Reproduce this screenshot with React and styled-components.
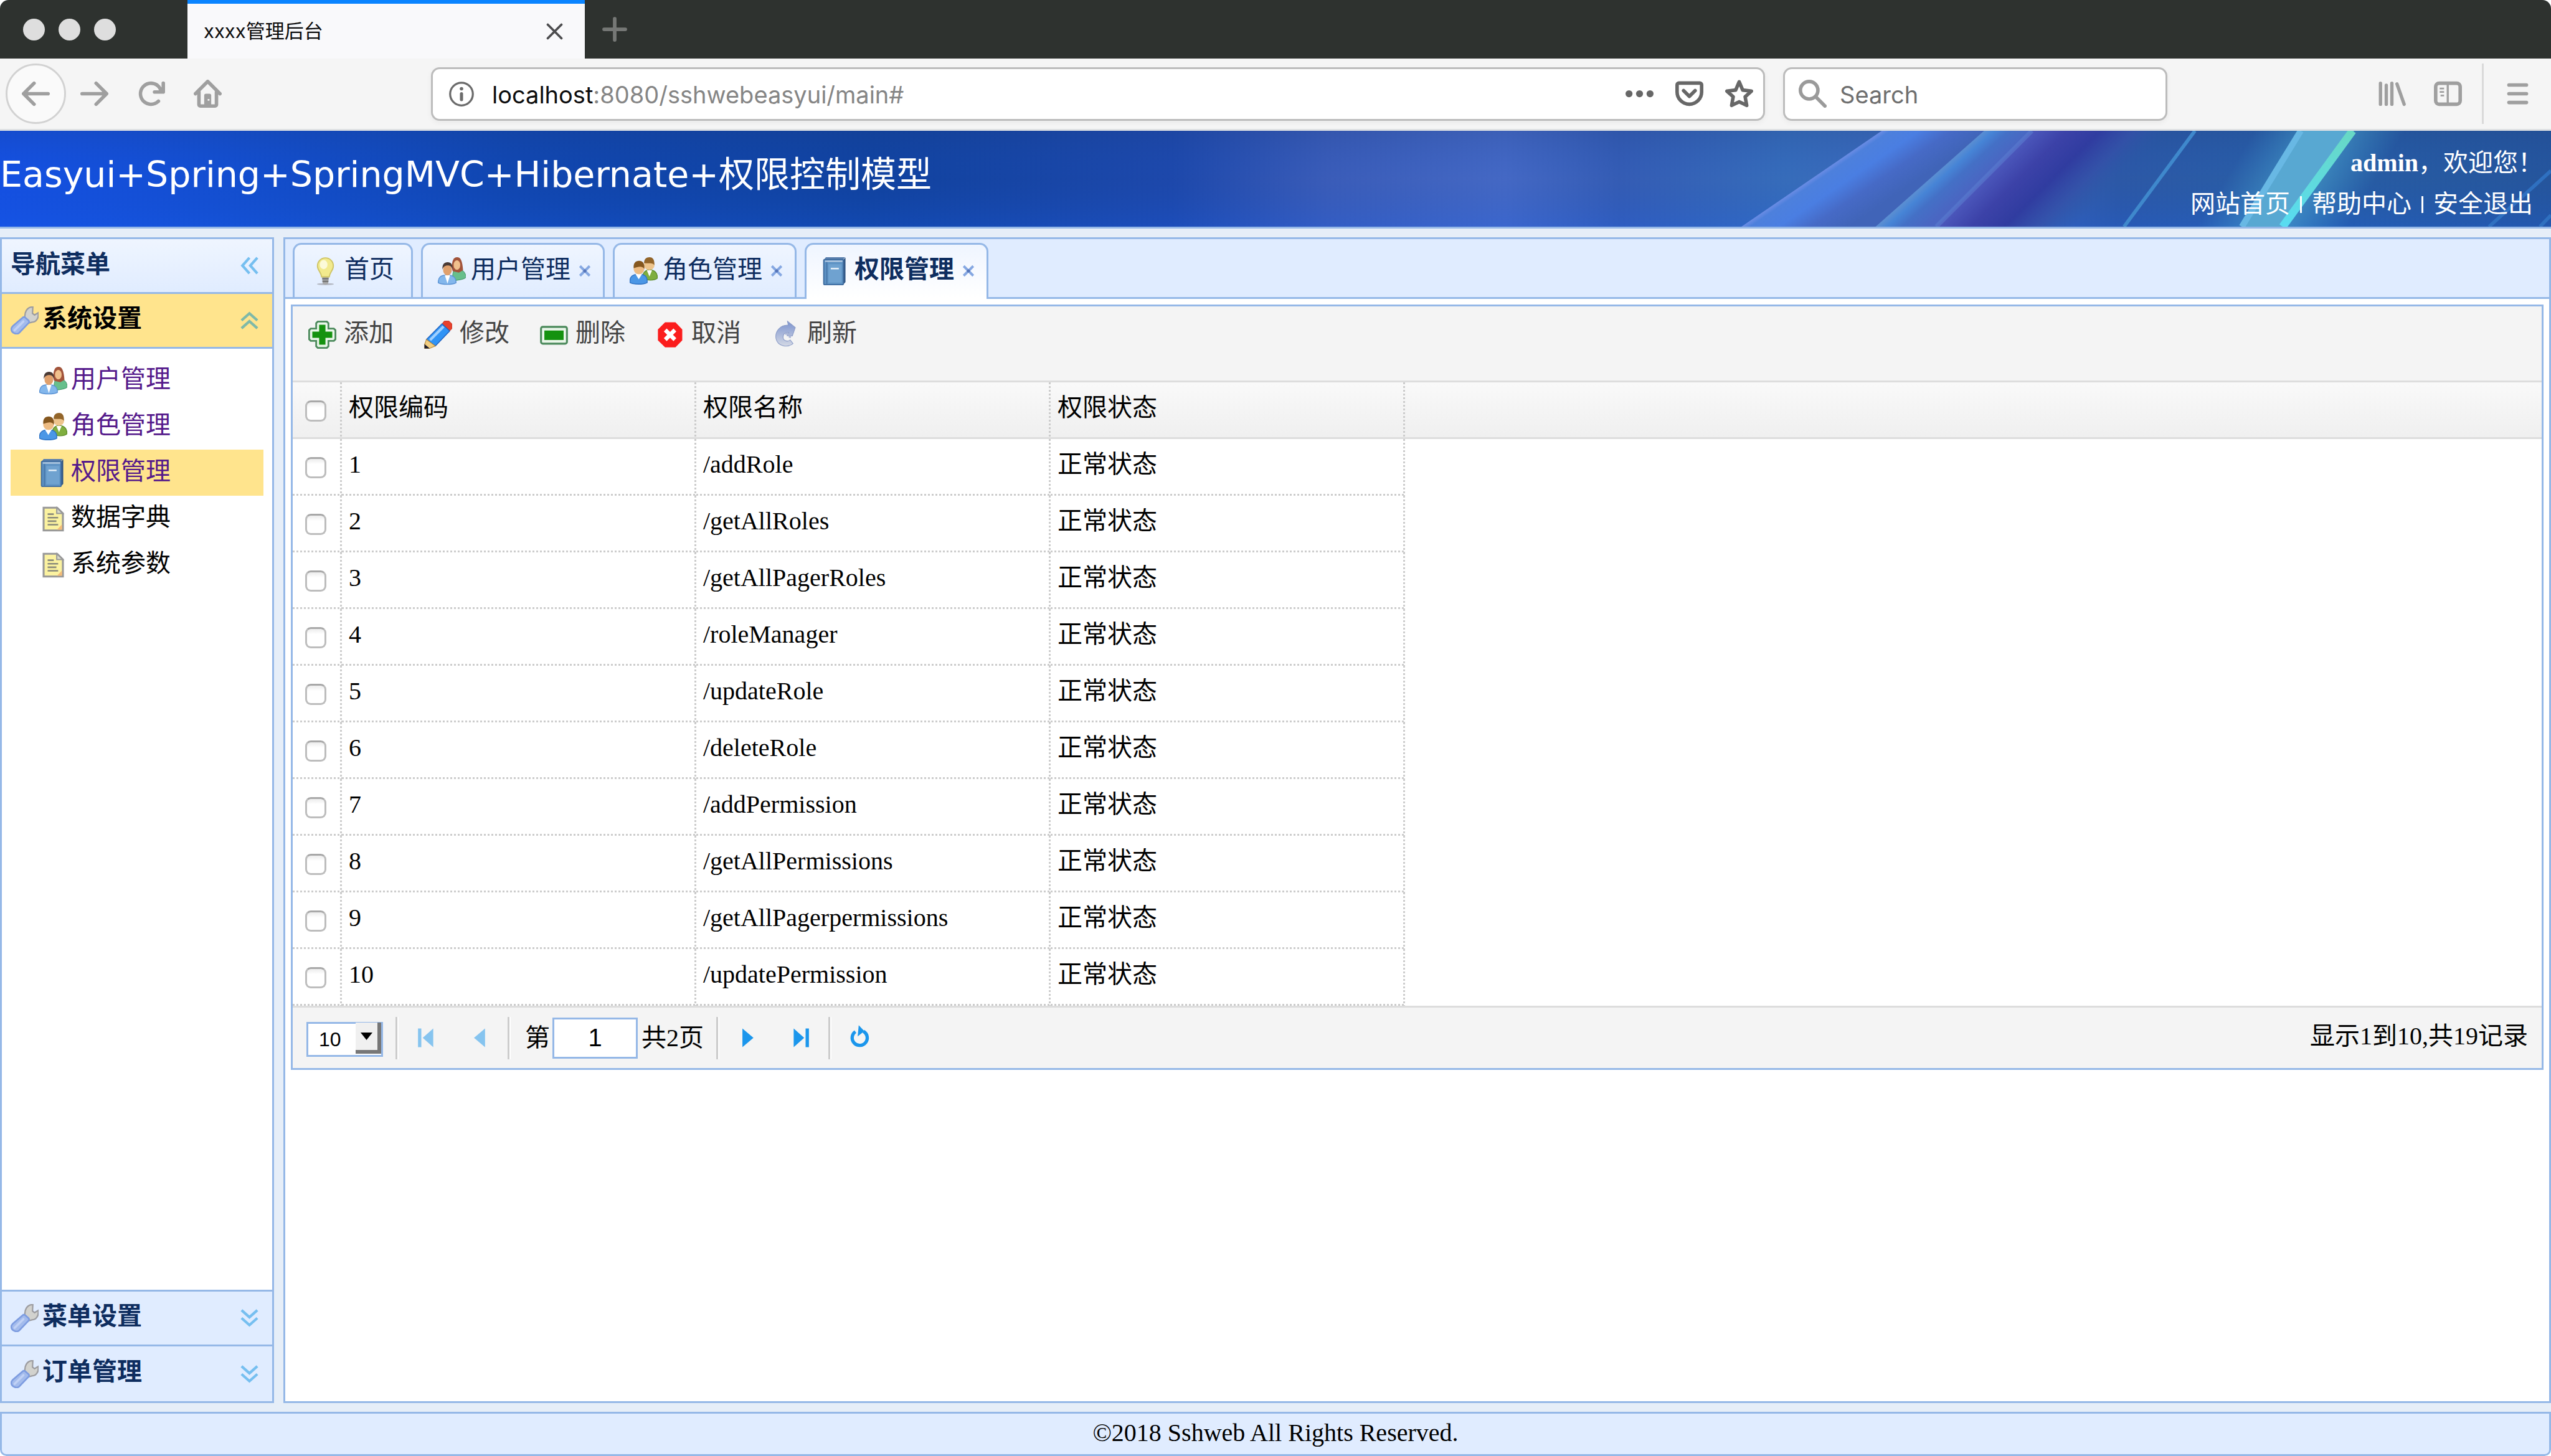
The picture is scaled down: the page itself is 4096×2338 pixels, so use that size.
import React, { useState } from "react";
import styled, { createGlobalStyle, css } from "styled-components";

const line = "#95b8e7";
const cjk = '"Noto Sans CJK SC"';
const serif = `"Liberation Serif", ${cjk}, serif`;
const sans = `"Liberation Sans", ${cjk}, sans-serif`;
const chrome = `Inter, ${cjk}, sans-serif`;

const GlobalStyle = createGlobalStyle`
  *, *::before, *::after { box-sizing: border-box; }
  html, body, #root { height: 100%; }
  body { margin: 0; background: #fff; font: 40px/56px ${serif}; color: #000; }
  button, input, select { font: inherit; color: inherit; margin: 0; padding: 0; }
  button { background: none; border: 0; cursor: pointer; }
  a { color: inherit; text-decoration: none; }
  ul { list-style: none; margin: 0; padding: 0; }
  h1, h2, h3, p { margin: 0; font-size: inherit; font-weight: inherit; }
  svg { display: block; flex: none; }
`;

const Page = styled.div`
  display: flex;
  flex-direction: column;
  min-height: 100%;
  border-radius: 14px 14px 10px 10px;
  overflow: hidden;
  background: #e6eef8;
`;

/* ---------- browser window ---------- */

const TitleBar = styled.div`
  display: flex;
  align-items: center;
  height: 94px;
  background: #2e322f;
`;

const Lights = styled.div`
  display: flex;
  gap: 22px;
  width: 301px;
  padding-left: 37px;
`;

const Light = styled.span`
  width: 35px;
  height: 35px;
  border-radius: 50%;
  background: #dedede;
`;

const BrowserTab = styled.div`
  display: flex;
  align-items: center;
  justify-content: space-between;
  align-self: stretch;
  width: 638px;
  padding: 0 35px 0 26px;
  border-top: 6px solid #0a84ff;
  background: #f9f9fb;
  font: 31px/40px ${chrome};
  color: #0c0c0d;
`;

const IconButton = styled.button`
  display: flex;
  align-items: center;
  justify-content: center;
  color: ${(p) => p.$color || "#9f9f9f"};
`;

const NewTab = styled(IconButton)`
  width: 96px;
  height: 88px;
`;

const NavBar = styled.div`
  display: flex;
  align-items: center;
  height: 116px;
  padding: 0 31px 0 9px;
  background: #f5f5f5;
  border-bottom: 3px solid #dfe1e3;
`;

const NavButtons = styled.div`
  display: flex;
  align-items: center;
  gap: 46px;
  width: 683px;
`;

const BackButton = styled(IconButton)`
  width: 97px;
  height: 97px;
  margin-right: -23px;
  border: 3px solid #d2d2d2;
  border-radius: 50%;
  background: #fafafa;
`;

const Field = styled.label`
  display: flex;
  align-items: center;
  min-width: 0;
  height: 86px;
  border: 3px solid #bcbcbc;
  border-radius: 14px;
  background: #fff;
  box-shadow: 0 3px 9px rgba(0, 0, 0, 0.05);
  font: 38px/56px ${chrome};
`;

const UrlField = styled(Field)`
  flex: 0 1 2142px;
  gap: 29px;
  padding: 0 16px 0 26px;
`;

const UrlText = styled.span`
  flex: 1;
  padding-top: 2px;
  color: #858585;
  b { font-weight: 400; color: #0c0c0d; }
`;

const UrlTools = styled.div`
  display: flex;
  gap: 35px;
`;

const SearchField = styled(Field)`
  flex: 0 1 617px;
  gap: 21px;
  margin-left: 29px;
  padding: 0 20px 0 22px;
  input {
    flex: 1;
    min-width: 0;
    padding-top: 2px;
    border: 0;
    outline: 0;
    background: none;
  }
  input::placeholder { color: #6f6f6f; opacity: 1; }
`;

const SearchIcon = styled.span`
  color: #9a9a9a;
`;

const NavTools = styled.div`
  display: flex;
  align-items: center;
  gap: 45px;
  margin-left: auto;
`;

const NavDivider = styled.span`
  width: 3px;
  height: 97px;
  margin: 0 -13px;
  background: #d9d9d9;
`;

/* ---------- banner ---------- */

const Banner = styled.header`
  position: relative;
  display: flex;
  align-items: center;
  justify-content: space-between;
  height: 157px;
  border-bottom: 3px solid ${line};
  color: #fff;
`;

const BannerArt = styled.svg`
  position: absolute;
  inset: 0;
  width: 100%;
  height: 100%;
`;

const BannerTitle = styled.h1`
  position: relative;
  padding-bottom: 14px;
  font: 57px/80px "DejaVu Sans", ${cjk}, sans-serif;
`;

const BannerSide = styled.div`
  position: relative;
  display: flex;
  flex-direction: column;
  align-items: flex-end;
  padding: 16px 13px 0 0;
  line-height: 66px;
`;

const BannerLinks = styled.nav`
  display: flex;
  align-items: center;
  gap: 16px;
  padding-right: 16px;
`;

const Bar = styled.span`
  width: 3px;
  height: 27px;
  background: #fff;
`;

/* ---------- layout ---------- */

const Middle = styled.div`
  flex: 1;
  display: flex;
  gap: 15px;
  padding: 14px 0;
`;

const West = styled.aside`
  display: flex;
  flex-direction: column;
  width: 440px;
  border: 3px solid ${line};
  background: #fff;
`;

const PanelHead = styled.div`
  display: flex;
  align-items: center;
  justify-content: space-between;
  height: 88px;
  padding: 0 14px;
  border-bottom: 3px solid ${line};
  background: linear-gradient(#eff5ff, #e0ecff);
  color: #0e2d5f;
  font-weight: 700;
  h2 { padding-bottom: 4px; }
`;

const AccordionHead = styled.button`
  display: flex;
  align-items: center;
  width: 100%;
  height: 88px;
  padding: 0 14px;
  border-bottom: 3px solid ${line};
  background: ${(p) => (p.$open ? "#ffe48d" : "#e0ecff")};
  color: ${(p) => (p.$open ? "#000" : "#0e2d5f")};
  font-weight: 700;
  text-align: left;
  &:last-child { border-bottom: 0; }
  span { flex: 1; padding: 0 0 6px 6px; }
`;

const AccordionBody = styled.div`
  flex: 1;
  padding: 14px;
  border-bottom: 3px solid ${line};
`;

const MenuLink = styled.a`
  display: flex;
  align-items: center;
  gap: 6px;
  height: 74px;
  padding-left: 46px;
  background: ${(p) => (p.$active ? "#ffe48d" : "transparent")};
  color: ${(p) => (p.$visited ? "#551a8b" : "#000")};
  span { padding-bottom: 4px; }
`;

const Center = styled.main`
  flex: 1;
  min-width: 0;
  border: 3px solid ${line};
  background: #fff;
`;

const Tabs = styled.div`
  display: flex;
  align-items: flex-end;
  gap: 13px;
  height: 96px;
  padding-left: 12px;
  border-bottom: 3px solid ${line};
  background: #e0ecff;
`;

const Tab = styled.div`
  display: flex;
  align-items: center;
  height: 87px;
  padding: 0 ${(p) => (p.$plain ? 27 : 19)}px 0 ${(p) => (p.$plain ? 27 : 24)}px;
  border: 3px solid ${line};
  border-bottom: 0;
  border-radius: 14px 14px 0 0;
  background: linear-gradient(#eff5ff, #e0ecff);
  color: #0e2d5f;
  ${(p) =>
    p.$active &&
    css`
      height: 90px;
      margin-bottom: -3px;
      padding-bottom: 3px;
      background: linear-gradient(#eff5ff, #fff);
      font-weight: 700;
    `}
`;

const TabLabel = styled.button`
  display: flex;
  align-items: center;
  gap: 8px;
  font-weight: inherit;
  span { padding-bottom: 5px; }
`;

const TabClose = styled(IconButton)`
  width: 20px;
  height: 20px;
  margin-left: 13px;
`;

const Content = styled.div`
  padding: 9px;
`;

const Datagrid = styled.section`
  border: 3px solid ${line};
`;

const Toolbar = styled.div`
  display: flex;
  align-items: flex-start;
  gap: 49px;
  height: 122px;
  padding: 14px 25px;
  border-bottom: 3px solid #ddd;
  background: #f4f4f4;
`;

const ToolButton = styled.button`
  display: flex;
  align-items: center;
  gap: 12px;
  height: 62px;
  color: #444;
  span { padding-bottom: 4px; }
`;

const Table = styled.table`
  width: 100%;
  border-collapse: separate;
  border-spacing: 0;
  table-layout: fixed;
  text-align: left;
`;

const Col = styled.col`
  width: ${(p) => p.$width}px;
`;

const dottedRight = "repeating-linear-gradient(#ccc 0 3px, transparent 3px 6px) right / 3px 100% no-repeat";
const dottedBottom = "repeating-linear-gradient(90deg, #ccc 0 3px, transparent 3px 6px) bottom / 100% 3px no-repeat";

const HeadRow = styled.tr`
  background: linear-gradient(#f9f9f9, #efefef);
`;

const HeadCell = styled.th`
  height: 91px;
  padding: 0 11px 6px;
  border-bottom: 3px solid #ddd;
  background: ${dottedRight};
  font-weight: 400;
  &:first-child { padding: 0; }
  &:last-child { background: none; }
`;

const Cell = styled.td`
  height: 91px;
  padding: 0 11px 9px;
  background: ${dottedRight}, ${dottedBottom};
  &:first-child { padding: 0; }
  &:last-child { background: none; }
`;

const Check = styled.input`
  appearance: none;
  display: block;
  width: 34px;
  height: 34px;
  margin: 0 0 0 20px;
  border: 3px solid #bdbdbd;
  border-top-color: #a8a8a8;
  border-radius: 9px;
  background: linear-gradient(#ececec, #fff 30%);
  th & { margin-top: 4px; }
`;

const Pager = styled.div`
  display: flex;
  align-items: center;
  height: 100px;
  padding: 0 22px;
  border-top: 3px solid #ddd;
  background: #f4f4f4;
`;

const SizeBox = styled.div`
  position: relative;
  width: 123px;
  height: 56px;
  margin-right: 20px;
  select {
    appearance: none;
    width: 100%;
    height: 100%;
    padding-left: 17px;
    border: 3px solid ${line};
    border-radius: 0;
    background: #fff;
    font: 32px/48px ${sans};
  }
`;

const SizeArrow = styled.span`
  position: absolute;
  top: 3px;
  right: 3px;
  bottom: 3px;
  display: flex;
  align-items: center;
  justify-content: center;
  width: 41px;
  border: solid;
  border-width: 0 6px 6px 0;
  border-color: #f0f0f0 #777 #777 #f0f0f0;
  background: #f0f0f0;
  pointer-events: none;
`;

const PagerDivider = styled.span`
  width: 5px;
  height: 68px;
  border-left: 3px solid #ccc;
  border-right: 2px solid #fff;
`;

const PagerGroup = styled.div`
  display: flex;
  gap: 39px;
  padding: 0 23px;
`;

const PagerButton = styled(IconButton)`
  width: 45px;
  height: 62px;
  color: #1b96ec;
  opacity: ${(p) => (p.disabled ? 0.5 : 1)};
`;

const PageLabel = styled.label`
  display: flex;
  align-items: center;
  padding: 0 20px 0 23px;
  input {
    width: 137px;
    height: 66px;
    margin: 0 6px 0 4px;
    border: 3px solid ${line};
    background: #fff;
    font: 40px/56px ${sans};
    text-align: center;
  }
`;

const Summary = styled.p`
  margin-left: auto;
  padding-bottom: 6px;
`;

const Footer = styled.footer`
  height: 71px;
  padding-top: 3px;
  border: 3px solid ${line};
  border-radius: 0 0 10px 10px;
  background: #e0ecff;
  text-align: center;
`;

/* ---------- icons ---------- */

const Glyph = ({ size = 45, box = 16, children, ...rest }) => (
  <svg width={size} height={size} viewBox={`0 0 ${box} ${box}`} fill="currentColor" aria-hidden="true" {...rest}>
    {children}
  </svg>
);

const stroke = { fill: "none", stroke: "currentColor", strokeLinecap: "round", strokeLinejoin: "round" };

const CloseGlyph = () => (
  <Glyph size={27}><path {...stroke} strokeWidth="2.2" d="M1.5 1.5l13 13M14.5 1.5l-13 13" /></Glyph>
);
const PlusGlyph = () => (
  <Glyph size={40}><path {...stroke} strokeWidth="2.3" d="M8 1.2v13.6M1.2 8h13.6" /></Glyph>
);
const BackGlyph = () => (
  <Glyph>
    <path {...stroke} strokeWidth="2" d="M15 8H1.400M7 2L1 8l6 6" />
    <path d="M1 8l2.600-1.600v3.200z" />
  </Glyph>
);
const ForwardGlyph = () => (
  <Glyph>
    <path {...stroke} strokeWidth="2" d="M1 8h13.600M9 2l6 6-6 6" />
    <path d="M15 8l-2.600-1.600v3.200z" />
  </Glyph>
);
const ReloadGlyph = () => (
  <Glyph>
    <path d="M15 1a1 1 0 0 0-1 1v2.418A6.995 6.995 0 1 0 8 15a6.954 6.954 0 0 0 4.950-2.050 1 1 0 0 0-1.414-1.414A5.019 5.019 0 1 1 12.549 6H10a1 1 0 0 0 0 2h5a1 1 0 0 0 1-1V2a1 1 0 0 0-1-1z" />
  </Glyph>
);
const HomeGlyph = () => (
  <Glyph>
    <path {...stroke} strokeWidth="2" d="M1 8l7-7 7 7M3 7v7.200a.8.8 0 0 0 .8.8h8.400a.8.8 0 0 0 .8-.8V7" />
    <path fillRule="evenodd" d="M6 15V9a1 1 0 0 1 1-1h2a1 1 0 0 1 1 1v6zM8 11v1h1v-1z" />
  </Glyph>
);
const InfoGlyph = () => (
  <Glyph size={40}>
    <circle cx="8" cy="8" r="7.3" fill="none" stroke="currentColor" strokeWidth="1.3" />
    <circle cx="8" cy="4.6" r="1.1" />
    <path {...stroke} strokeWidth="2" d="M8 7.800v3.800" />
  </Glyph>
);
const MoreGlyph = () => (
  <Glyph><circle cx="2" cy="8" r="2" /><circle cx="8" cy="8" r="2" /><circle cx="14" cy="8" r="2" /></Glyph>
);
const PocketGlyph = () => (
  <Glyph>
    <path {...stroke} strokeWidth="2" d="M2 1.900h12a1 1 0 0 1 1 1V7a7 7 0 0 1-14 0V2.900a1 1 0 0 1 1-1z" />
    <path {...stroke} strokeWidth="2" d="M4.700 6.200L8 9.500l3.300-3.300" />
  </Glyph>
);
const StarGlyph = () => (
  <Glyph>
    <path {...stroke} strokeWidth="2" d="M8 1.200l2 4.700 5 .6-3.600 3.200.9 5L8 12.600l-4.300 2.100.9-5L1 6.500l5-.6z" />
  </Glyph>
);
const SearchGlyph = () => (
  <Glyph>
    <circle cx="6" cy="6" r="5" fill="none" stroke="currentColor" strokeWidth="2" />
    <path {...stroke} strokeWidth="2" d="M9.800 9.800L15 15" />
  </Glyph>
);
const LibraryGlyph = () => (
  <Glyph><path {...stroke} strokeWidth="1.900" d="M1.500 2v12M4.800 3.200V14M8 2v12M10.900 2.400L15 14" /></Glyph>
);
const SidebarGlyph = () => (
  <Glyph>
    <rect x="1" y="2" width="14" height="12" rx="2" fill="none" stroke="currentColor" strokeWidth="2" />
    <path d="M7.300 2.500h1.200v11H7.300zM3.300 4.500h2.500v1H3.300zM3.300 6.500h2.500v1H3.300zM3.800 8.500h2v1h-2z" />
  </Glyph>
);
const MenuGlyph = () => (
  <Glyph><path {...stroke} strokeWidth="2" d="M3 3h10M3 8h10M3 13h10" /></Glyph>
);

const Chevrons = ({ dir, color = "#76bff0" }) => {
  const turn = { left: 0, up: 90, down: -90 }[dir];
  return (
    <Glyph color={color}>
      <g transform={`rotate(${turn} 8 8)`}>
        <path {...stroke} strokeLinecap="butt" strokeLinejoin="miter" strokeWidth="1.500" d="M8 3.500L4 8l4 4.500M12.500 3.500L8.500 8l4 4.500" />
      </g>
    </Glyph>
  );
};

const Wrench = () => (
  <Glyph>
    <path d="M8.300 7.200C7.600 3.500 9.300.3 12.700.3l-.2 3.700 1.200.9 2-1.200c.5 2.900-1 5.300-3.500 5.300l-1.800.5z" fill="#d2d2ce" stroke="#9c9ca0" strokeWidth=".8" />
    <path d="M6.900 6.400c.5-.5 1-.4 1.500 0l1.800 1.600c.5.500.5 1 0 1.600l-5.300 5.500c-1.400 1.200-4.500.2-4.500-2.200 0-.7.300-1.100.8-1.600z" fill="#a3bbec" stroke="#7d9ce0" strokeWidth=".9" />
    <path d="M7.300 8.600l-5 5" stroke="#c0d1f5" strokeWidth="1.300" strokeLinecap="round" />
  </Glyph>
);
const Users = () => (
  <Glyph>
    <path d="M8.500 13.500V10c0-2 1-3 3.200-3S16 8.500 16 11.500c-1 1.300-4 1.500-7.500 2z" fill="#67bf8c" stroke="#4a9d72" strokeWidth=".4" />
    <path d="M8 6c0-4 1-6 3-6s3 2 3.400 7.500L12 8.800 8.500 8z" fill="#a2543b" />
    <ellipse cx="10.900" cy="4.500" rx="1.900" ry="2.700" fill="#f0c08d" />
    <path d="M.2 14.600c0-3 1.200-4.400 5-4.400s5.200 1.400 5.200 4.400c-2.400 1.200-7.600 1.200-10.200 0z" fill="#83b7ec" stroke="#5a92d4" strokeWidth=".5" />
    <path d="M4 10.300L5.500 15 7 10.300z" fill="#fff" />
    <ellipse cx="5.500" cy="7.200" rx="2.500" ry="3.200" fill="#e0a06c" />
    <path d="M2.600 7C2.500 4 3.700 2.800 5.600 2.800S8.600 4 8.400 7c-.6-1.800-1.400-2.300-2.700-2.300S3.200 5.200 2.600 7z" fill="#4a3a35" />
  </Glyph>
);
const Group = () => (
  <Glyph>
    <path d="M7.500 12.500C7 9.500 8.500 7.300 11.500 7.300s4.500 2 4.300 4.700c-1.600 1.300-5 1.300-8.300.5z" fill="#7fae3f" stroke="#5f8f2c" strokeWidth=".5" />
    <path d="M9.800 7.500L11.300 11l1.500-3.500z" fill="#fff" />
    <circle cx="11.200" cy="4.400" r="3" fill="#edc48c" />
    <path d="M8.200 3.400C8.200 1 9.600 0 11.300 0s3 1 2.800 4.500C13 3 11 3.700 8.200 3.400z" fill="#93652a" />
    <path d="M.2 14.500c-.3-3.300 1.300-4.800 5-4.800s5 1.500 4.800 4.800c-2.600 1.200-7.200 1.200-9.800 0z" fill="#4b97e6" stroke="#2f73c4" strokeWidth=".5" />
    <path d="M3.300 9.600l1.900 3 1.900-3z" fill="#fff" />
    <circle cx="5.300" cy="6.800" r="3" fill="#edbb82" />
    <path d="M2.300 6.300C2 3.300 3.400 2 5.400 2s3.300 1.300 3 4.800C7.300 4.800 5 5.300 2.300 6.300z" fill="#85571f" />
  </Glyph>
);
const Book = () => (
  <Glyph>
    <path d="M2.500 0h11L12 1.800H1.200z" fill="#5b80ae" />
    <path d="M13.700.2v14l-1.500 1.600V1.800z" fill="#2f5584" />
    <rect x="1.300" y="1.300" width="11.200" height="14.400" rx=".6" fill="#5e93c4" stroke="#3f6c9f" strokeWidth=".7" />
    <path d="M3 1.500v14" stroke="#4a79ac" strokeWidth=".8" />
    <path d="M2 2.300h10" stroke="#b8cde4" strokeWidth=".8" />
    <rect x="4" y="4" width="7.500" height="10.500" fill="#6fa2d0" />
    <path d="M5.300 6.500h4.600" stroke="#e3eef8" strokeWidth=".9" />
  </Glyph>
);
const Note = () => (
  <Glyph>
    <path d="M2.500 1.500h7.700l3.300 3.300v9.700h-11z" fill="#fbf2a0" stroke="#989898" strokeWidth="1.100" />
    <path d="M10 1.500v3.300h3.500z" fill="#d9d9c8" stroke="#989898" strokeWidth=".7" />
    <path d="M4.800 5.200h3.500M4.800 7.200h6M4.800 9.200h5M4.800 11.200h6" stroke="#8b8b7a" strokeWidth=".9" />
    <path d="M10.200 14l2.800-3v3z" fill="#f4bb78" />
  </Glyph>
);
const Bulb = () => (
  <Glyph>
    <ellipse cx="8" cy="15.400" rx="4.800" ry=".6" fill="#b5b9c4" />
    <path d="M6 10.500h4l-.4 4.400c-.5.800-2.700.800-3.200 0z" fill="#a8a8a8" />
    <path d="M6.200 12.300h3.600M6.300 13.800h3.400" stroke="#6d6d6d" strokeWidth=".7" />
    <path d="M8 .4a4.500 4.500 0 0 1 4.500 4.800c0 2.200-2 3.300-2.300 6H5.800c-.3-2.700-2.300-3.800-2.300-6A4.500 4.500 0 0 1 8 .4z" fill="#f2ea8d" stroke="#cfc568" strokeWidth=".7" />
    <ellipse cx="7" cy="4.200" rx="2.200" ry="2.600" fill="#fcfad8" />
  </Glyph>
);
const Add = () => (
  <Glyph>
    <path d="M5.400.5h5.200l.9.900v3.100h3.100l.9.900v5.200l-.9.900h-3.100v3.100l-.9.900H5.400l-.9-.9v-3.100H1.400l-.9-.9V5.400l.9-.9h3.100V1.400z" fill="#e9f6e9" stroke="#4c8a5c" strokeWidth="1" />
    <path d="M6.200 2.300h3.600v3.900h3.900v3.600H9.800v3.900H6.200V9.800H2.300V6.200h3.900z" fill="#14920f" />
  </Glyph>
);
const Pencil = () => (
  <Glyph>
    <path d="M11.500.2h2.700l1.600 1.500v2.900l-1.200 1.200L10.300 1.700z" fill="#e8402c" stroke="#c02a18" strokeWidth=".3" />
    <path d="M10.200 1.800l4.400 4.100-8.200 8.500-5.100-3.700z" fill="#2f93f5" stroke="#1f62c0" strokeWidth=".5" />
    <path d="M11.100 3.300L3.400 11" stroke="#9fd0ff" strokeWidth="1.500" />
    <path d="M1.300 10.700l5.100 3.700-3.300 1.400H.3v-2.300z" fill="#f2cd80" stroke="#b88a3a" strokeWidth=".4" />
    <path d="M.2 13.300l3 2.500H.2z" fill="#1c1c2c" />
  </Glyph>
);
const Remove = () => (
  <Glyph>
    <rect x=".6" y="3.500" width="14.800" height="9.600" rx="1" fill="#eaf6ea" stroke="#4c8a5c" strokeWidth="1.100" />
    <rect x="2.500" y="5.600" width="11" height="5.400" fill="#14920f" />
  </Glyph>
);
const Cancel = () => (
  <Glyph>
    <path d="M5.300.9h5.900l3.900 4.100v6.200l-3.900 4H5.300L1.200 11.200V5z" fill="#fb1d1d" />
    <path d="M5.400 5.300l5.500 5.500M10.900 5.300l-5.500 5.500" stroke="#fff" strokeWidth="2.300" />
  </Glyph>
);
const Reload = () => (
  <Glyph>
    <defs>
      <linearGradient id="reloadFade" x1="0" y1="0" x2="0" y2="1">
        <stop offset="0" stopColor="#7c93cf" />
        <stop offset="1" stopColor="#d3d8e4" />
      </linearGradient>
    </defs>
    <path d="M9 .2l4.500 3.700-1.700 4.800-3-.2 1-1.700C7.500 6.300 6.200 8 6.600 10c.4 1.700 2.800 2 4 1l1.600 2c-3 2.600-8.700 1.800-9.700-2.700C1.700 6 5 2.300 9.500 2.500z" fill="url(#reloadFade)" stroke="#8b9cc8" strokeWidth=".4" />
    <path d="M7.600 7.500c1.600-.3 3 .6 2.800 2.300" fill="none" stroke="#a9b5d6" strokeWidth="1.200" />
  </Glyph>
);
const SmallClose = () => (
  <Glyph size={20} box={7}>
    <path d="M.8.8l5.400 5.400M6.200.8L.8 6.200" stroke="#86a8e2" strokeWidth="1.400" />
    <circle cx="3.500" cy="3.500" r=".9" fill="#5574b8" />
  </Glyph>
);
const First = () => <Glyph><path d="M2.900 2.700h1.900v10.600H2.900zM11.600 2.700v10.600L5.600 8z" /></Glyph>;
const Prev = () => <Glyph><path d="M11.300 2.700v10.600L5 8z" /></Glyph>;
const Next = () => <Glyph><path d="M5 2.700v10.600L11.300 8z" /></Glyph>;
const Last = () => <Glyph><path d="M11.200 2.700h1.900v10.600h-1.900zM4.400 2.700v10.600l6-5.300z" /></Glyph>;
const Refresh = () => (
  <Glyph>
    <path d="M10.100 4.300a4.300 4.300 0 1 1-4.600.2" fill="none" stroke="currentColor" strokeWidth="1.900" />
    <path d="M7.400.8l3.200 3.400-3.800 3z" />
  </Glyph>
);

const BannerStreaks = () => (
  <BannerArt viewBox="0 0 5760 216" preserveAspectRatio="none" aria-hidden="true">
    <defs>
      <linearGradient id="base">
        <stop offset="0" stopColor="#1450e2" />
        <stop offset=".09" stopColor="#134ed0" />
        <stop offset=".2" stopColor="#1046b0" />
        <stop offset=".34" stopColor="#10429f" />
        <stop offset=".46" stopColor="#1d48ab" />
        <stop offset=".52" stopColor="#3a5cb8" />
        <stop offset=".59" stopColor="#4468c4" />
        <stop offset=".635" stopColor="#345cb4" />
        <stop offset=".7" stopColor="#366cba" />
        <stop offset=".78" stopColor="#3f66ba" />
        <stop offset=".83" stopColor="#2c58a6" />
        <stop offset=".9" stopColor="#285ea6" />
        <stop offset="1" stopColor="#25559c" />
      </linearGradient>
      <linearGradient id="rise" x1="0" y1="0" x2="0" y2="1">
        <stop offset="0" stopColor="#1c3c80" stopOpacity=".2" />
        <stop offset=".5" stopColor="#1a50c0" stopOpacity="0" />
        <stop offset="1" stopColor="#1a60f0" stopOpacity=".22" />
      </linearGradient>
      <linearGradient id="bandA" gradientUnits="userSpaceOnUse" x1="4249" y1="0" x2="4326" y2="113">
        <stop offset="0" stopColor="#6a8ce4" />
        <stop offset=".08" stopColor="#4d80dc" />
        <stop offset=".35" stopColor="#4a7ee2" />
        <stop offset=".65" stopColor="#466ac6" />
        <stop offset="1" stopColor="#4064b8" />
      </linearGradient>
      <linearGradient id="bandB" gradientUnits="userSpaceOnUse" x1="4480" y1="0" x2="4530" y2="56">
        <stop offset="0" stopColor="#5a8ed2" />
        <stop offset=".2" stopColor="#4684d6" />
        <stop offset=".5" stopColor="#4470c6" />
        <stop offset="1" stopColor="#4a66c2" />
      </linearGradient>
      <linearGradient id="bandC" gradientUnits="userSpaceOnUse" x1="4588" y1="0" x2="4743" y2="155">
        <stop offset="0" stopColor="#4c58bc" />
        <stop offset=".25" stopColor="#3c42a8" />
        <stop offset=".5" stopColor="#303ca0" />
        <stop offset=".75" stopColor="#3450a8" stopOpacity=".8" />
        <stop offset="1" stopColor="#2c58a6" stopOpacity="0" />
      </linearGradient>
      <linearGradient id="glow" gradientUnits="userSpaceOnUse" x1="5090" y1="0" x2="5340" y2="150">
        <stop offset="0" stopColor="#4ab0d8" stopOpacity="0" />
        <stop offset=".5" stopColor="#58bcd8" stopOpacity=".55" />
        <stop offset="1" stopColor="#4ab0d8" stopOpacity="0" />
      </linearGradient>
      <linearGradient id="edge" x1="0" y1="0" x2="0" y2="1">
        <stop offset="0" stopColor="#68d8c4" />
        <stop offset="1" stopColor="#58dcf2" />
      </linearGradient>
    </defs>
    <rect width="5760" height="216" fill="url(#base)" />
    <rect width="5760" height="216" fill="url(#rise)" />
    <path d="M4249 0H4500L4255 216H3932z" fill="url(#bandA)" />
    <path d="M4480 0H4600L4384 216H4235z" fill="url(#bandB)" />
    <path d="M4588 0H4898L4682 216H4372z" fill="url(#bandC)" />
    <path d="M4588 0L4372 216" stroke="#5a7cd0" strokeWidth="10" opacity=".6" />
    <path d="M4956 0L4796 216" stroke="#3f88cc" strokeWidth="8" />
    <path d="M5060 0H5460L5320 216H4920z" fill="url(#glow)" />
    <path d="M5195 0H5316L5158 216H5062z" fill="#58a8d2" />
    <path d="M5195 0L5062 216" stroke="#68b8e4" strokeWidth="14" />
    <path d="M5312 0L5154 216" stroke="url(#edge)" strokeWidth="18" />
    <path d="M5760 90L5620 216M5760 190L5735 216" stroke="#2f70c0" strokeWidth="8" />
  </BannerArt>
);

/* ---------- data ---------- */

const menu = [
  { label: "用户管理", Icon: Users, visited: true },
  { label: "角色管理", Icon: Group, visited: true },
  { label: "权限管理", Icon: Book, visited: true, active: true },
  { label: "数据字典", Icon: Note },
  { label: "系统参数", Icon: Note },
];

const tabs = [
  { label: "首页", Icon: Bulb, plain: true },
  { label: "用户管理", Icon: Users },
  { label: "角色管理", Icon: Group },
  { label: "权限管理", Icon: Book },
];

const tools = [
  { label: "添加", Icon: Add },
  { label: "修改", Icon: Pencil },
  { label: "删除", Icon: Remove },
  { label: "取消", Icon: Cancel },
  { label: "刷新", Icon: Reload },
];

const rows = [
  "/addRole",
  "/getAllRoles",
  "/getAllPagerRoles",
  "/roleManager",
  "/updateRole",
  "/deleteRole",
  "/addPermission",
  "/getAllPermissions",
  "/getAllPagerpermissions",
  "/updatePermission",
];

/* ---------- parts ---------- */

const Browser = () => (
  <>
    <TitleBar>
      <Lights><Light /><Light /><Light /></Lights>
      <BrowserTab>
        <span>xxxx管理后台</span>
        <IconButton $color="#4c4c4e" aria-label="Close tab"><CloseGlyph /></IconButton>
      </BrowserTab>
      <NewTab $color="#767876" aria-label="New tab"><PlusGlyph /></NewTab>
    </TitleBar>
    <NavBar>
      <NavButtons>
        <BackButton aria-label="Back"><BackGlyph /></BackButton>
        <IconButton aria-label="Forward"><ForwardGlyph /></IconButton>
        <IconButton aria-label="Reload"><ReloadGlyph /></IconButton>
        <IconButton aria-label="Home"><HomeGlyph /></IconButton>
      </NavButtons>
      <UrlField as="div">
        <IconButton $color="#6b6b6b" aria-label="Site information"><InfoGlyph /></IconButton>
        <UrlText><b>localhost</b>:8080/sshwebeasyui/main#</UrlText>
        <UrlTools>
          <IconButton $color="#676767" aria-label="Page actions"><MoreGlyph /></IconButton>
          <IconButton $color="#676767" aria-label="Pocket"><PocketGlyph /></IconButton>
          <IconButton $color="#676767" aria-label="Bookmark"><StarGlyph /></IconButton>
        </UrlTools>
      </UrlField>
      <SearchField>
        <SearchIcon><SearchGlyph /></SearchIcon>
        <input type="text" placeholder="Search" aria-label="Search" />
      </SearchField>
      <NavTools>
        <IconButton aria-label="Library"><LibraryGlyph /></IconButton>
        <IconButton aria-label="Sidebars"><SidebarGlyph /></IconButton>
        <NavDivider />
        <IconButton aria-label="Menu"><MenuGlyph /></IconButton>
      </NavTools>
    </NavBar>
  </>
);

const Sidebar = () => (
  <West>
    <PanelHead>
      <h2>导航菜单</h2>
      <IconButton aria-label="收起"><Chevrons dir="left" /></IconButton>
    </PanelHead>
    <AccordionHead $open>
      <Wrench /><span>系统设置</span><Chevrons dir="up" color="#7fb9a8" />
    </AccordionHead>
    <AccordionBody>
      <ul>
        {menu.map(({ label, Icon, visited, active }) => (
          <li key={label}>
            <MenuLink href="#" $visited={visited} $active={active}><Icon /><span>{label}</span></MenuLink>
          </li>
        ))}
      </ul>
    </AccordionBody>
    <AccordionHead><Wrench /><span>菜单设置</span><Chevrons dir="down" /></AccordionHead>
    <AccordionHead><Wrench /><span>订单管理</span><Chevrons dir="down" /></AccordionHead>
  </West>
);

const PermissionTable = () => (
  <Table>
    <colgroup>
      <Col $width={79} />
      <Col $width={569} />
      <Col $width={569} />
      <Col $width={569} />
      <col />
    </colgroup>
    <thead>
      <HeadRow>
        <HeadCell><Check type="checkbox" aria-label="全选" /></HeadCell>
        <HeadCell>权限编码</HeadCell>
        <HeadCell>权限名称</HeadCell>
        <HeadCell>权限状态</HeadCell>
        <HeadCell />
      </HeadRow>
    </thead>
    <tbody>
      {rows.map((name, i) => (
        <tr key={name}>
          <Cell><Check type="checkbox" aria-label={name} /></Cell>
          <Cell>{i + 1}</Cell>
          <Cell>{name}</Cell>
          <Cell>正常状态</Cell>
          <Cell />
        </tr>
      ))}
    </tbody>
  </Table>
);

const Pagination = () => (
  <Pager>
    <SizeBox>
      <select aria-label="每页记录数" defaultValue="10">
        <option>10</option>
        <option>20</option>
      </select>
      <SizeArrow>
        <svg width="19" height="12" viewBox="0 0 19 12" aria-hidden="true"><path d="M0 0h19L9.500 12z" /></svg>
      </SizeArrow>
    </SizeBox>
    <PagerDivider />
    <PagerGroup>
      <PagerButton disabled aria-label="首页"><First /></PagerButton>
      <PagerButton disabled aria-label="上一页"><Prev /></PagerButton>
    </PagerGroup>
    <PagerDivider />
    <PageLabel>
      第<input type="text" defaultValue="1" />共2页
    </PageLabel>
    <PagerDivider />
    <PagerGroup>
      <PagerButton aria-label="下一页"><Next /></PagerButton>
      <PagerButton aria-label="末页"><Last /></PagerButton>
    </PagerGroup>
    <PagerDivider />
    <PagerGroup>
      <PagerButton aria-label="刷新"><Refresh /></PagerButton>
    </PagerGroup>
    <Summary>显示1到10,共19记录</Summary>
  </Pager>
);

export default function App() {
  const [current, setCurrent] = useState("权限管理");
  return (
    <>
      <GlobalStyle />
      <Page>
        <Browser />
        <Banner>
          <BannerStreaks />
          <BannerTitle>Easyui+Spring+SpringMVC+Hibernate+权限控制模型</BannerTitle>
          <BannerSide>
            <p><b>admin</b>，欢迎您！</p>
            <BannerLinks>
              <a href="#">网站首页</a><Bar /><a href="#">帮助中心</a><Bar /><a href="#">安全退出</a>
            </BannerLinks>
          </BannerSide>
        </Banner>
        <Middle>
          <Sidebar />
          <Center>
            <Tabs>
              {tabs.map(({ label, Icon, plain }) => (
                <Tab key={label} $plain={plain} $active={label === current}>
                  <TabLabel onClick={() => setCurrent(label)}><Icon /><span>{label}</span></TabLabel>
                  {!plain && <TabClose aria-label={`关闭${label}`}><SmallClose /></TabClose>}
                </Tab>
              ))}
            </Tabs>
            <Content>
              <Datagrid>
                <Toolbar>
                  {tools.map(({ label, Icon }) => (
                    <ToolButton key={label}><Icon /><span>{label}</span></ToolButton>
                  ))}
                </Toolbar>
                <PermissionTable />
                <Pagination />
              </Datagrid>
            </Content>
          </Center>
        </Middle>
        <Footer>©2018 Sshweb All Rights Reserved.</Footer>
      </Page>
    </>
  );
}
